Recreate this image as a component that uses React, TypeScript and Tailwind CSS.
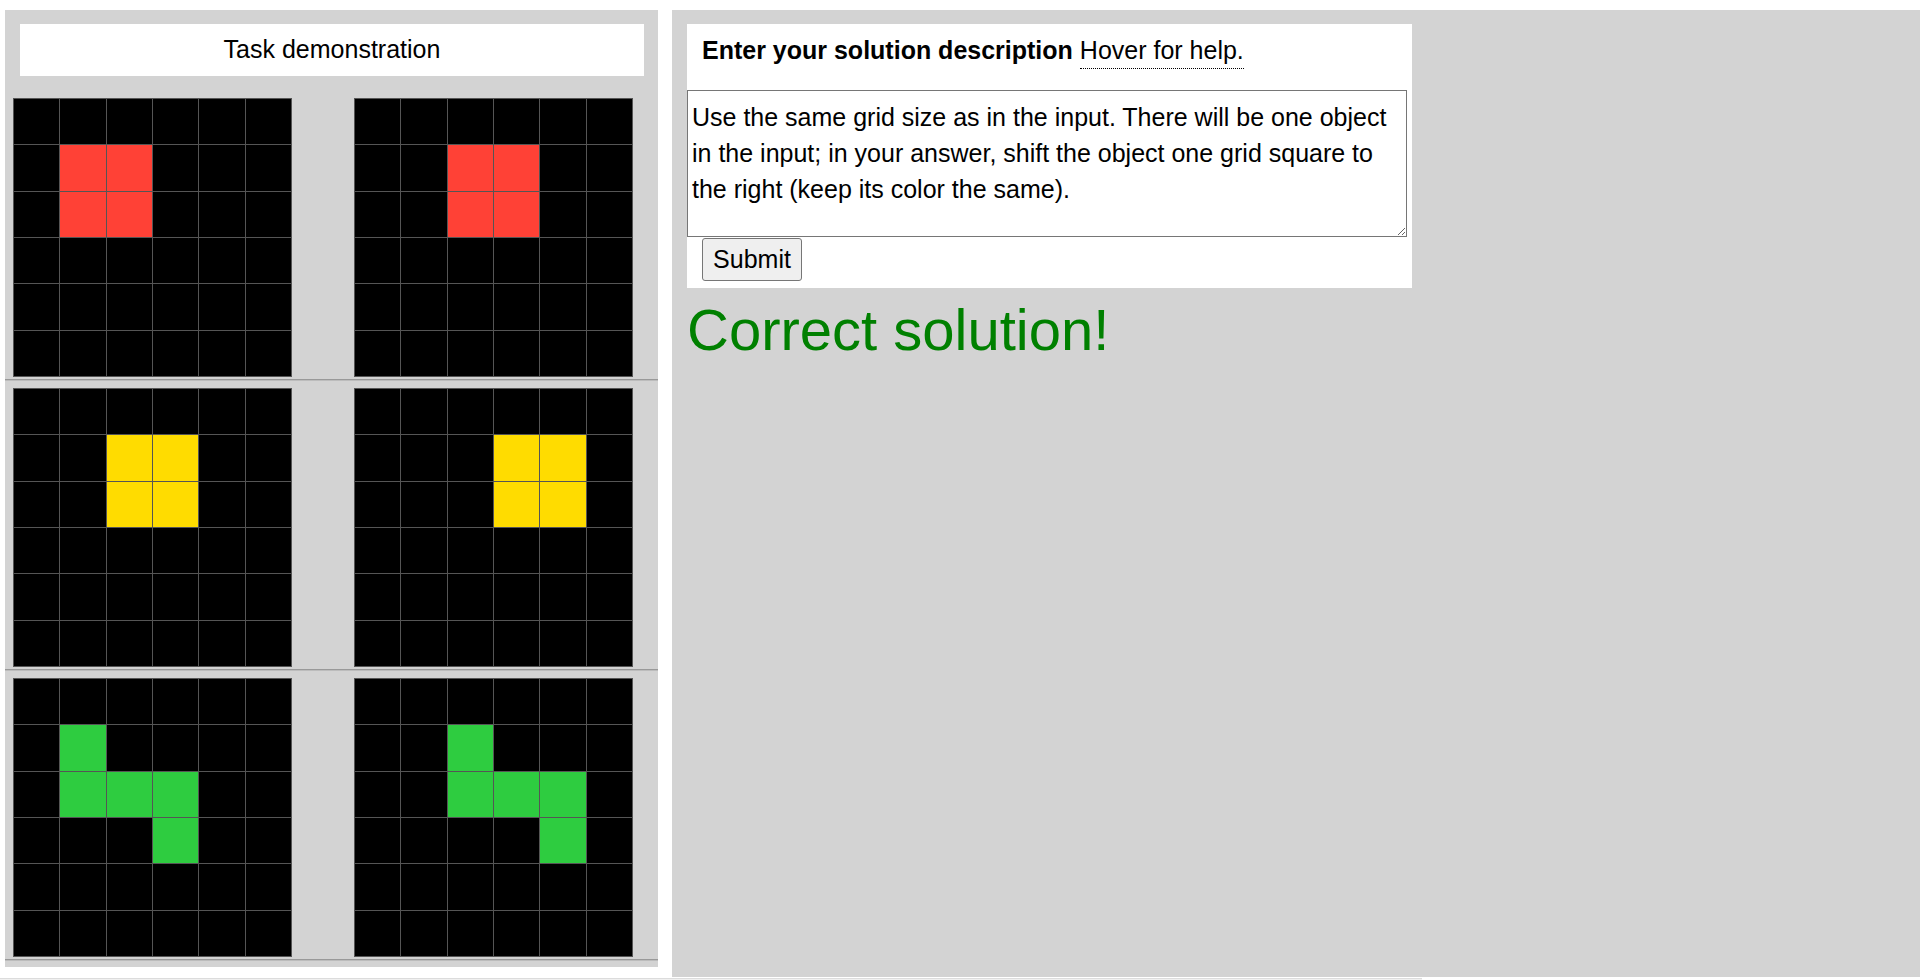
import React from "react";

type Cell = [number, number];

type Pair = {
    color: string;
    cells: Cell[];
};

const pairs: Pair[] = [
    { color: "#FF4136", cells: [[1, 1], [1, 2], [2, 1], [2, 2]] },
    { color: "#FFDC00", cells: [[1, 2], [1, 3], [2, 2], [2, 3]] },
    { color: "#2ECC40", cells: [[1, 1], [2, 1], [2, 2], [2, 3], [3, 3]] },
];

function Grid({ color, cells }: Pair) {
    const filled = (r: number, c: number) =>
        cells.some(([cr, cc]) => cr === r && cc === c);
    return (
        <div className="grid grid-cols-6 grid-rows-6 gap-px p-px w-[279px] h-[279px] bg-[#555555] shrink-0">
            {Array.from({ length: 36 }).map((_, i) => {
                const r = Math.floor(i / 6);
                const c = i % 6;
                return (
                    <div
                        key={i}
                        className="bg-black"
                        style={filled(r, c) ? { backgroundColor: color } : undefined}
                    />
                );
            })}
        </div>
    );
}

export default function App() {
    return (
        <div className="h-[980px] w-[1920px] overflow-hidden bg-white font-['Liberation_Sans',Arial,sans-serif] text-black">
            <div className="flex gap-[14px] pt-[10px]">
                {/* demonstration panel */}
                <div className="ml-[5px] w-[653px] h-[957px] bg-[#d3d3d3] flex flex-col">
                    <div className="mt-[14px] ml-[15px] mr-[14px] h-[52px] bg-white flex items-center justify-center text-[25px]">
                        Task demonstration
                    </div>
                    <div className="pt-[22px]">
                        {pairs.map((p, i) => (
                            <div key={i} className={i === 0 ? "" : "pt-[7px]"}>
                                <div className="flex gap-[62px] pl-[8px] pb-[2px]">
                                    <Grid color={p.color} cells={p.cells} />
                                    <Grid
                                        color={p.color}
                                        cells={p.cells.map(([r, c]) => [r, c + 1] as Cell)}
                                    />
                                </div>
                                <div className="h-[2px] border-t border-[#999999] border-b border-b-[#bcbcbc]" />
                            </div>
                        ))}
                    </div>
                </div>

                {/* solution panel */}
                <div className="flex-1 h-[967px] bg-[#d3d3d3] pl-[15px] pt-[14px]">
                    <div className="w-[725px] bg-white pb-[7px]">
                        <div className="pl-[15px] pt-[12px] pb-[25px] text-[25px] leading-[29px]">
                            <span className="font-bold">Enter your solution description</span>{" "}
                            <span className="pb-[4px] border-b border-dotted border-black">
                                Hover for help.
                            </span>
                        </div>
                        <textarea
                            className="block w-[720px] h-[147px] border border-[#767676] pt-[9px] pl-[4px] pr-[2px] text-[25px] leading-[35.8px] outline-none resize"
                            defaultValue="Use the same grid size as in the input. There will be one object in the input; in your answer, shift the object one grid square to the right (keep its color the same)."
                        />
                        <button className="mt-px ml-[15px] w-[100px] h-[43px] border border-[#767676] rounded-[3px] bg-[#efefef] text-[25px] leading-[29px] flex items-center justify-center">
                            Submit
                        </button>
                    </div>
                    <div className="mt-[9px] text-[58px] leading-[66px] text-[#008000]">
                        Correct solution!
                    </div>
                </div>
            </div>
            <div className="mt-px w-[1422px] h-[2px] bg-[#f0f0f0] border-t border-[#dcdcdc]" />
        </div>
    );
}
